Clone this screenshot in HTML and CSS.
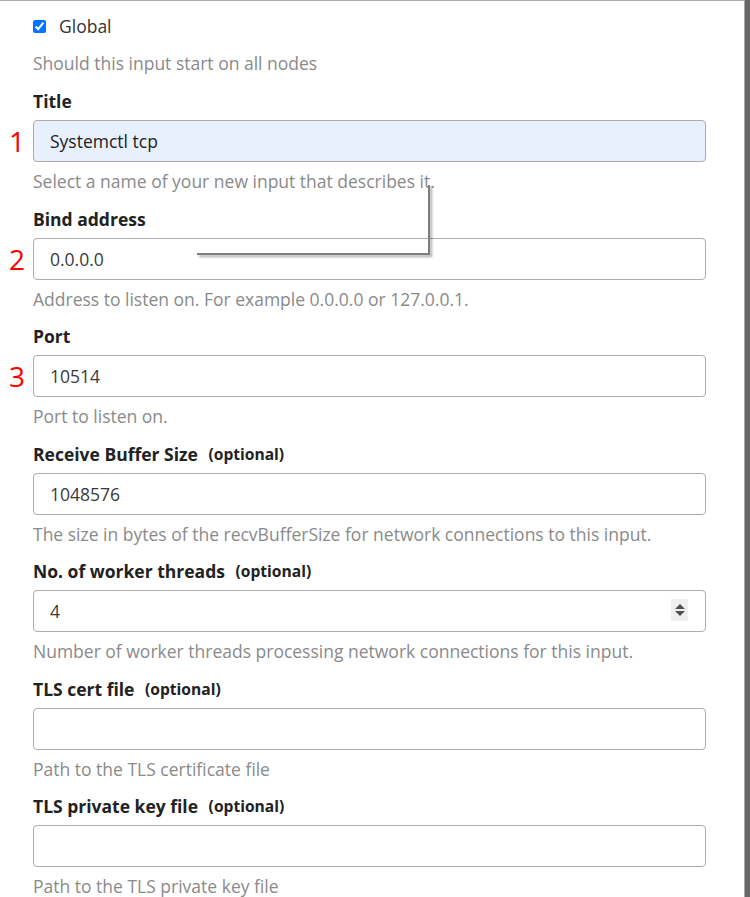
FILE: index.html
```html
<!DOCTYPE html>
<html>
<head>
<meta charset="utf-8">
<link rel="stylesheet" href="styles.css">
</head>
<body>
<div class="page">
  <div class="panel">
    <form class="form">
      <label class="check"><input type="checkbox" class="check-box" checked><span>Global</span></label>
      <p class="help first-help">Should this input start on all nodes</p>

      <div class="field">
        <label class="label">Title</label>
        <div class="control"><span class="marker">1</span><input class="input autofill" type="text" value="Systemctl tcp"></div>
        <p class="help">Select a name of your new input that describes it.</p>
      </div>

      <div class="field">
        <label class="label">Bind address</label>
        <div class="control"><span class="marker">2</span><input class="input" type="text" value="0.0.0.0"></div>
        <p class="help">Address to listen on. For example 0.0.0.0 or 127.0.0.1.</p>
      </div>

      <div class="field">
        <label class="label">Port</label>
        <div class="control"><span class="marker">3</span><input class="input" type="text" value="10514"></div>
        <p class="help">Port to listen on.</p>
      </div>

      <div class="field">
        <label class="label">Receive Buffer Size <span class="opt">(optional)</span></label>
        <div class="control"><input class="input" type="text" value="1048576"></div>
        <p class="help">The size in bytes of the recvBufferSize for network connections to this input.</p>
      </div>

      <div class="field">
        <label class="label">No. of worker threads <span class="opt">(optional)</span></label>
        <div class="control"><input class="input" type="text" value="4"><span class="spinner"><span class="tri-up"></span><span class="tri-down"></span></span></div>
        <p class="help">Number of worker threads processing network connections for this input.</p>
      </div>

      <div class="field">
        <label class="label">TLS cert file <span class="opt">(optional)</span></label>
        <div class="control"><input class="input" type="text" value=""></div>
        <p class="help">Path to the TLS certificate file</p>
      </div>

      <div class="field">
        <label class="label">TLS private key file <span class="opt">(optional)</span></label>
        <div class="control"><input class="input" type="text" value=""></div>
        <p class="help">Path to the TLS private key file</p>
      </div>
    </form>
    <div class="callout"></div>
  </div>
  <div class="rail"></div>
</div>
</body>
</html>
```

FILE: styles.css
```css
* { box-sizing: border-box; }
html, body {
  margin: 0;
  padding: 0;
  height: 100%;
  overflow: hidden;
}
body {
  font-family: "Open Sans", "Noto Sans", sans-serif;
  font-size: 17.5px;
  color: #333;
  background: #fff;
}
.page {
  display: flex;
  height: 897px;
}
.panel {
  position: relative;
  width: 744px;
  flex: none;
  background: #fff;
  border-top: 1px solid #ababab;
}
.rail {
  flex: 1;
  background: #676767;
  border-left: 1px solid #a8a8a8;
}
.form {
  padding: 13px 0 0 33px;
  width: 706px;
}
.check {
  display: flex;
  align-items: center;
  gap: 13px;
  height: 24px;
  line-height: 24px;
  color: #333;
}
.check-box {
  margin: 0;
  width: 13px;
  height: 13px;
  accent-color: #0075ff;
}
.help {
  margin: 7px 0 0;
  height: 24px;
  line-height: 24px;
  color: #8a8a8a;
  white-space: nowrap;
}
.first-help {
  margin-top: 13px;
}
.field {
  margin-top: 13.5px;
}
.first-help + .field {
  margin-top: 14px;
}
.label {
  display: flex;
  align-items: center;
  height: 24px;
  font-weight: 700;
  line-height: 24px;
  color: #222;
  margin-bottom: 7px;
  white-space: pre;
}
.opt {
  font-size: 15.6px;
  line-height: 24px;
  margin-left: 6px;
}
.control {
  position: relative;
  height: 42px;
}
.input {
  display: block;
  width: 100%;
  height: 42px;
  margin: 0;
  padding: 0 16px;
  border: 1px solid #acacac;
  border-radius: 4px;
  font-family: "Open Sans", "Noto Sans", sans-serif;
  font-size: 17.5px;
  color: #3a3a3a;
  background: #fff;
  outline: none;
}
.autofill {
  background: #e8f0fe;
  color: #222;
}
.marker {
  position: absolute;
  right: calc(100% + 8px);
  top: 50%;
  transform: translateY(-50%);
  font-size: 28px;
  line-height: 30px;
  color: #ff0000;
}
.spinner {
  position: absolute;
  right: 18px;
  top: 9px;
  width: 17px;
  height: 22px;
  background: #efefef;
  display: flex;
  flex-direction: column;
  align-items: center;
  justify-content: center;
  gap: 2px;
}
.tri-up {
  width: 0;
  height: 0;
  border-left: 5px solid transparent;
  border-right: 5px solid transparent;
  border-bottom: 5px solid #505050;
}
.tri-down {
  width: 0;
  height: 0;
  border-left: 5px solid transparent;
  border-right: 5px solid transparent;
  border-top: 5px solid #505050;
}
.callout {
  position: absolute;
  left: 197px;
  top: 184px;
  width: 233px;
  height: 70px;
  border-right: 2px solid #7d7d7d;
  border-bottom: 2px solid #7d7d7d;
  filter: drop-shadow(2px 2px 1px rgba(0, 0, 0, 0.35));
  pointer-events: none;
}
```
